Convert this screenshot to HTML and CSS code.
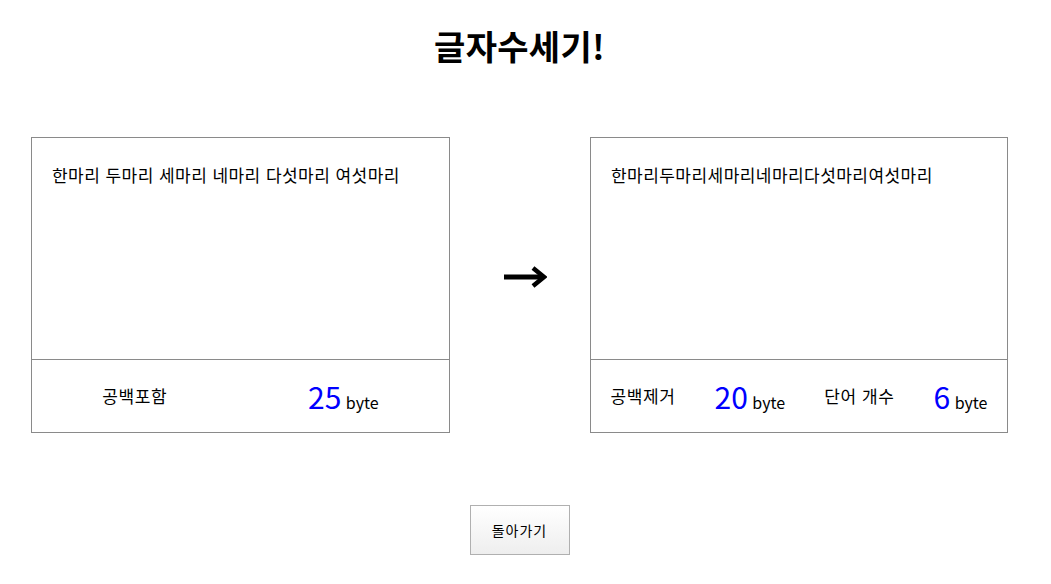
FILE: index.html
```html
<!DOCTYPE html>
<html lang="ko">
<head>
<meta charset="utf-8">
<title>글자수세기!</title>
<link rel="stylesheet" href="styles.css">
</head>
<body>
<div class="page">
  <h1 class="title">글자수세기!</h1>
  <div class="row">
    <section class="card">
      <div class="card-text">한마리 두마리 세마리 네마리 다섯마리 여섯마리</div>
      <div class="card-foot">
        <span class="label">공백포함</span>
        <span class="count"><span class="num">25</span> byte</span>
      </div>
    </section>
    <div class="arrow">
      <svg width="44" height="22" viewBox="0 0 44 22">
        <path d="M1 11 H40" stroke="#000" stroke-width="5" fill="none"/>
        <path d="M30 2 L41 11 L30 20" stroke="#000" stroke-width="4.5" fill="none" stroke-linejoin="miter"/>
      </svg>
    </div>
    <section class="card card-right">
      <div class="card-text">한마리두마리세마리네마리다섯마리여섯마리</div>
      <div class="card-foot">
        <span class="label">공백제거</span>
        <span class="count"><span class="num">20</span> byte</span>
        <span class="label">단어 개수</span>
        <span class="count"><span class="num">6</span> byte</span>
      </div>
    </section>
  </div>
  <div class="actions">
    <button class="back-btn" type="button">돌아가기</button>
  </div>
</div>
</body>
</html>
```

FILE: styles.css
```css
html, body {
  margin: 0;
  padding: 0;
  background: #fff;
}
body {
  font-family: "Noto Sans CJK KR", "Noto Sans", sans-serif;
  color: #000;
}
.page {
  width: 1039px;
}
.title {
  margin: 0;
  padding-top: 26px;
  font-size: 34px;
  line-height: 40px;
  letter-spacing: 0.3px;
  font-weight: 700;
  text-align: center;
}
.row {
  margin-top: 71px;
  display: flex;
  justify-content: center;
  align-items: flex-start;
}
.card {
  width: 419px;
  height: 296px;
  box-sizing: border-box;
  border: 1px solid #8a8a8a;
  display: flex;
  flex-direction: column;
}
.card-right {
  width: 418px;
}
.card-text {
  height: 222px;
  box-sizing: border-box;
  padding: 26px 20px 0;
  font-size: 17px;
  line-height: 22px;
  letter-spacing: 0.45px;
  word-spacing: 0;
  border-bottom: 1px solid #8a8a8a;
}
.card-foot {
  flex: 1;
  display: flex;
  justify-content: space-around;
  align-items: center;
  font-size: 16px;
}
.label {
  font-size: 17px;
  letter-spacing: 0.6px;
  line-height: 20px;
  margin-top: -1px;
}
.count {
  line-height: 30px;
  margin-top: 5px;
}
.num {
  color: #0000ff;
  font-size: 30px;
}
.arrow {
  width: 140px;
  display: flex;
  justify-content: center;
  padding-left: 9px;
  box-sizing: border-box;
  margin-top: 129px;
}
.arrow svg {
  display: block;
}
.actions {
  display: flex;
  justify-content: center;
  margin-top: 72px;
}
.back-btn {
  width: 100px;
  height: 50px;
  border: 1px solid #b0b0b0;
  border-radius: 0;
  background: linear-gradient(#ffffff, #eeeeee);
  font-family: "Noto Sans CJK KR", sans-serif;
  font-size: 14px;
  letter-spacing: 1px;
  color: #000;
  padding: 0;
}
```
